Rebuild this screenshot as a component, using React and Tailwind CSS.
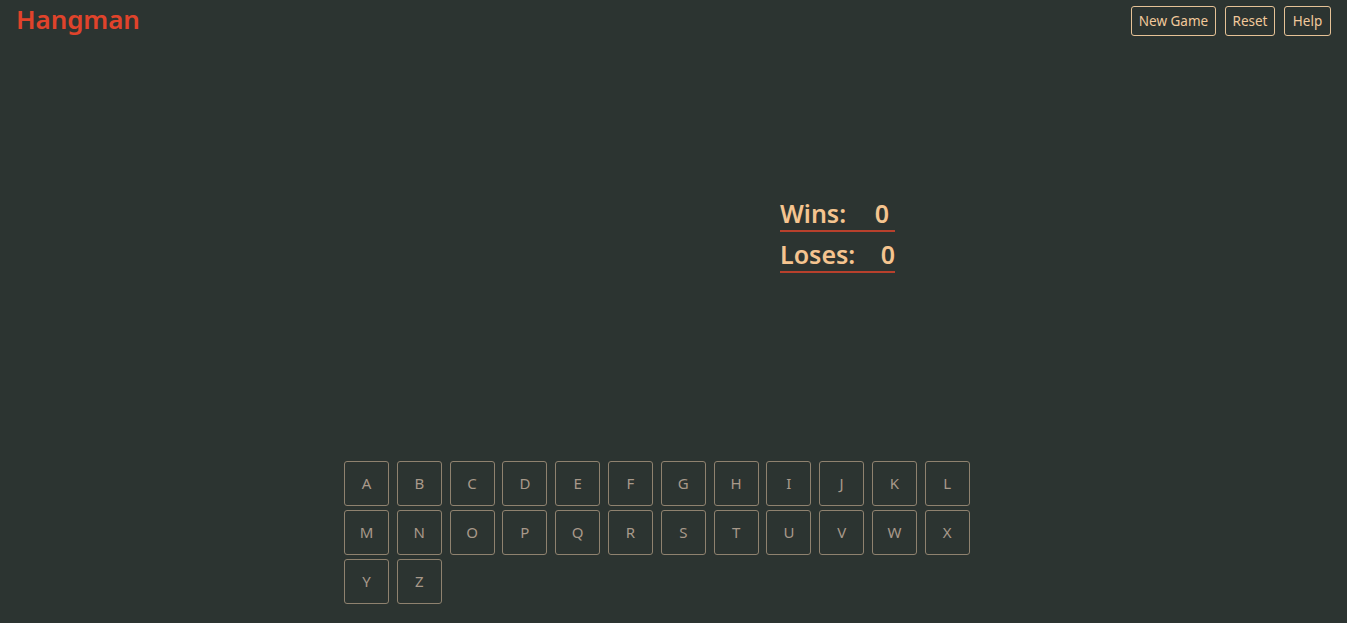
import React from 'react';

const letters = 'ABCDEFGHIJKLMNOPQRSTUVWXYZ'.split('');

const App = () => {
  return (
    <div className="min-h-screen bg-[#2c3431] font-['Noto_Sans',sans-serif]">
      <header className="flex items-start justify-between px-4 pt-[6px]">
        <h1 className="-mt-[1px] text-[26px] font-semibold leading-[28px] tracking-[-0.1px] text-[#e0432b]">
          Hangman
        </h1>
        <div className="flex gap-[9px]">
          <button className="h-[30px] w-[85px] rounded-[3px] border border-[#e6c296] text-[13.5px] text-[#f2c99b]">
            New Game
          </button>
          <button className="h-[30px] w-[50px] rounded-[3px] border border-[#e6c296] text-[13.5px] text-[#f2c99b]">
            Reset
          </button>
          <button className="h-[30px] w-[47px] rounded-[3px] border border-[#e6c296] text-[13.5px] text-[#f2c99b]">
            Help
          </button>
        </div>
      </header>

      <section className="ml-[780px] mt-[160px] flex w-[115px] flex-col gap-[5px] text-[25px] font-semibold text-[#f5c48f]">
        <div className="flex justify-between border-b-2 border-[#b8402c] pr-[6px] leading-[34px]">
          <span>Wins:</span>
          <span>0</span>
        </div>
        <div className="flex justify-between border-b-2 border-[#b8402c] leading-[34px]">
          <span>Loses:</span>
          <span>0</span>
        </div>
      </section>

      <section className="ml-[344px] mt-[188px] grid w-max grid-cols-12 gap-x-[7.8px] gap-y-[4px]">
        {letters.map((l) => (
          <button
            key={l}
            className="flex h-[45px] w-[45px] items-center justify-center rounded-[3px] border border-[#8f826f] text-[15px] text-[#a8998a]"
          >
            {l}
          </button>
        ))}
      </section>
    </div>
  );
};

export default App;
